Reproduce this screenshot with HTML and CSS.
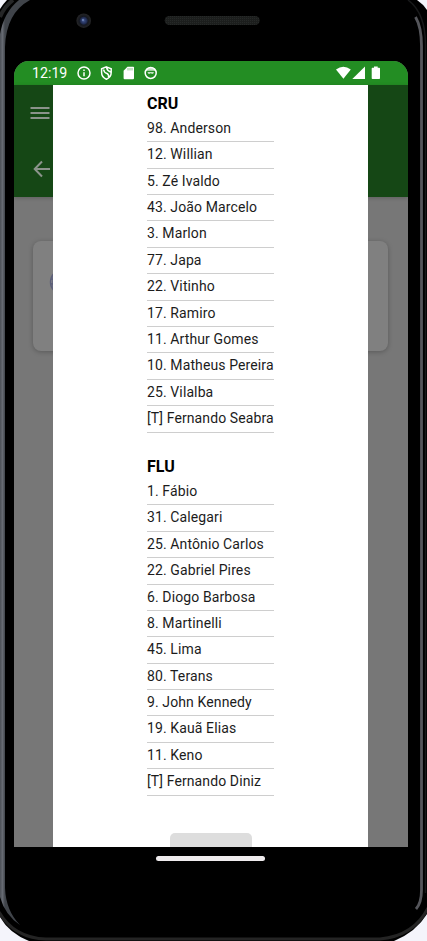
FILE: index.html
```html
<!DOCTYPE html>
<html lang="pt-BR">
<head>
<meta charset="utf-8">
<title>Escalações</title>
<link rel="stylesheet" href="styles.css">
</head>
<body>
<div class="device">
  <svg class="frame" viewBox="0 0 427 941" aria-hidden="true">
    <defs>
      <linearGradient id="rail" gradientUnits="userSpaceOnUse" x1="0" x2="5" y1="0" y2="0">
        <stop offset="0" stop-color="#4c5057"/><stop offset=".5" stop-color="#666a72"/><stop offset="1" stop-color="#40444a"/>
      </linearGradient>
      <radialGradient id="lens"><stop offset="0" stop-color="#405590"/><stop offset=".45" stop-color="#202b50"/><stop offset=".6" stop-color="#151820"/><stop offset="1" stop-color="#252526"/></radialGradient>
      <pattern id="mesh" width="2" height="2" patternUnits="userSpaceOnUse"><rect width="2" height="2" fill="#1c1e1d"/><rect width="1" height="1" fill="#262928"/></pattern>
    </defs>
    <path d="M7 0H417Q423 4 427 10V914Q416 932 394 941H29Q9 933 0 917V9Q3 4 7 0Z" fill="#000"/>
    <path d="M-1 912Q14 938 46 939H380Q414 936 428 908" fill="none" stroke="#242424" stroke-width="3"/>
    <path d="M0 17Q4 7 13 0" fill="none" stroke="#252627" stroke-width="4"/>
    <path d="M0 34Q4 12 19 0H30Q6 13 5 47V888Q6 911 20 925Q5 915 0 897Z" fill="url(#rail)"/>
    <path d="M415.500 17Q421.500 27 421.500 46V890Q421.500 903 416 909" fill="none" stroke="#55565b" stroke-width="2.800"/>
    <path d="M408 0Q425.500 13 425.500 45V893" fill="none" stroke="#18191a" stroke-width="1.500"/>
    <circle cx="83.700" cy="20.700" r="7.300" fill="url(#lens)"/>
    <circle cx="83" cy="20" r="1.200" fill="#667bad"/>
    <rect x="164.700" y="16" width="95" height="9" rx="4.500" fill="url(#mesh)"/>
  </svg>

  <main class="screen">
    <header class="status">
      <span class="clock">12:19</span>
      <svg class="status-icons" viewBox="0 0 82 16" fill="none" stroke="#fff" stroke-width="1.500">
        <circle cx="8" cy="8" r="6"/><path d="M8 7.200V11.300M8 4.600V6"/>
        <path d="M30.400 1.900L35.200 3.700V7.500C35.200 10.700 33.300 13 30.400 14.200C27.500 13 25.600 10.700 25.600 7.500V3.700ZM27.600 4.500Q28 7.500 31 8.500Q33 9.500 32.600 12M30.600 2.300Q31 5.500 34.600 7"/>
        <path d="M51.500 1.800H57.200Q58 1.800 58 2.600V13.200Q58 14.200 57 14.200H48.600Q47.600 14.200 47.600 13.200V5.700Z" fill="#fff" stroke="none"/><path d="M52 3V5.500M54 3V5.500M56 3V5.500" stroke="#6eb46e" stroke-width=".8"/>
        <circle cx="74.700" cy="8" r="5.500"/><path d="M69.500 5.800H80L79 3.500L75 2L71 3.500ZM71.500 7H77.900Q77.700 9 76.200 9L74.700 8.200L73.200 9Q71.700 9 71.500 7Z" fill="#fff" fill-opacity=".75" stroke="none"/>
      </svg>
      <svg class="signal-icons" viewBox="0 0 46 16" fill="#fff">
        <path d="M0 4.400Q7.300-.8 14.800 4.400L7.400 13.800Z"/><path d="M29 1.500V14H16.300Z"/><path d="M35.700 3.400Q35.700 2.700 36.400 2.700H38V1.400H41.700V2.700H43.300Q44 2.700 44 3.400V13.200Q44 14 43.200 14H36.500Q35.700 14 35.700 13.200Z"/>
      </svg>
    </header>

    <div class="viewport">
      <div class="page">
        <div class="bars">
          <div class="bar"><svg class="menu" viewBox="0 0 20 14"><path d="M.5 2H19.500M.5 7H19.500M.5 12H19.500"/></svg></div>
          <div class="bar"><svg class="back" viewBox="0 0 18 18"><path d="M17 9H2M9 1.500L1.700 9L9 16.500"/></svg></div>
        </div>
        <div class="match-card">
          <svg class="crest" viewBox="0 0 28 28"><circle cx="14" cy="14" r="12.500"/><path d="M2 11L7 12M2 16L7 15M4 8V20"/></svg>
        </div>
      </div>
      <section class="dialog">
        <div class="lineups">
          <h2>CRU</h2>
          <ul>
            <li>98. Anderson</li><li>12. Willian</li><li>5. Zé Ivaldo</li><li>43. João Marcelo</li>
            <li>3. Marlon</li><li>77. Japa</li><li>22. Vitinho</li><li>17. Ramiro</li>
            <li>11. Arthur Gomes</li><li>10. Matheus Pereira</li><li>25. Vilalba</li><li>[T] Fernando Seabra</li>
          </ul>
          <h2>FLU</h2>
          <ul>
            <li>1. Fábio</li><li>31. Calegari</li><li>25. Antônio Carlos</li><li>22. Gabriel Pires</li>
            <li>6. Diogo Barbosa</li><li>8. Martinelli</li><li>45. Lima</li><li>80. Terans</li>
            <li>9. John Kennedy</li><li>19. Kauã Elias</li><li>11. Keno</li><li>[T] Fernando Diniz</li>
          </ul>
        </div>
        <div class="button"></div>
      </section>
    </div>
  </main>
  <div class="home"></div>
</div>
</body>
</html>
```
FILE: styles.css
```css
* { box-sizing: border-box; }
body { margin: 0; background: #f4f4fb; font-family: Roboto, sans-serif; overflow: hidden; }
.device { position: relative; width: 427px; height: 941px; padding: 61px 19px 0 14px; overflow: hidden; }
.frame { position: absolute; inset: 0; width: 427px; height: 941px; }
.screen { position: relative; height: 786px; border-radius: 15px 15px 0 0; overflow: hidden; background: #777; }
.status { height: 23.5px; padding: 0 26px 0 18px; display: flex; align-items: center; background: #238d23; color: #fff; }
.clock { width: 44px; padding-top: 1px; font-size: 14.2px; line-height: 24px; }
.status-icons { width: 82px; height: 16px; }
.signal-icons { width: 46px; height: 16px; margin-left: auto; }
.viewport { position: relative; height: 762.5px; }
.page { height: 100%; background: #777; }
.bars { height: 112.5px; background: #154715; box-shadow: 0 1px 4px rgba(0, 0, 0, .2); }
.bar { height: 56.25px; padding-left: 16px; display: flex; align-items: center; }
.bar + .bar { padding-left: 19px; }
.bar svg { fill: none; stroke: #8b938b; stroke-width: 2; }
.menu { width: 20px; height: 14px; }
.back { width: 18px; height: 18px; }
.match-card { height: 110px; margin: 44px 20px 0 19px; padding: 27px 0 0 16px; border-radius: 8px; background: #808080; box-shadow: 0 1px 5px rgba(0, 0, 0, .25); }
.crest { width: 28px; height: 28px; fill: #85858d; stroke: #5d6079; stroke-width: 1.5; }
.dialog { position: absolute; top: 0; bottom: 0; left: 39px; width: 315px; display: flex; flex-direction: column; align-items: center; background: #fff; overflow: hidden; }
.lineups { width: 127px; margin-top: 7px; }
h2 { margin: 0; height: 24.4px; font-size: 16px; line-height: 24px; font-weight: 700; color: #000; }
ul { margin: 0; padding: 0; list-style: none; }
li { height: 26.4px; border-bottom: 1px solid #cecece; font-size: 14px; line-height: 25.4px; letter-spacing: .11px; white-space: nowrap; color: #1c1c1c; }
ul + h2 { margin-top: 22px; }
.button { width: 82px; height: 36px; margin-top: 37.2px; flex: none; border-radius: 5px; background: #ddd; }
.home { position: relative; width: 109px; height: 4.5px; margin: 9px auto 0 142px; border-radius: 3px; background: #eeebed; }
```
